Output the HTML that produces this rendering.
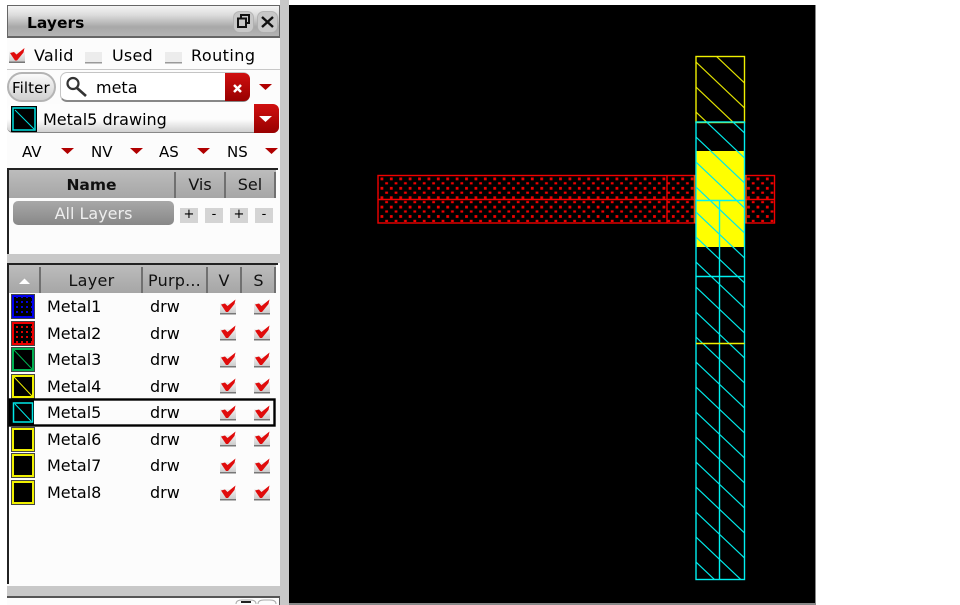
<!DOCTYPE html>
<html><head><meta charset="utf-8"><style>
html,body{margin:0;padding:0;background:#fff;}
body{width:960px;height:605px;overflow:hidden;position:relative;font-family:"DejaVu Sans","Liberation Sans",sans-serif;font-size:16px;color:#000;}
.a{position:absolute;white-space:nowrap;}
.t{position:absolute;white-space:nowrap;line-height:20px;height:20px;filter:blur(.35px);}
.hd{position:absolute;text-align:center;color:#111;line-height:24px;filter:blur(.35px);}
.bar{position:absolute;background:linear-gradient(#bcbcbc,#a6a6a6);}
.sep{position:absolute;width:2px;background:#707070;}
svg{position:absolute;left:0;top:0;}
</style></head><body>
<!-- panel surfaces -->
<div class="a" style="left:280px;top:0;width:9px;height:605px;background:#c8c8c8"></div>
<div class="a" style="left:7px;top:6px;width:273px;height:580px;background:#fcfcfc"></div>
<div class="a" style="left:7px;top:586px;width:273px;height:10px;background:#c8c8c8"></div>
<div class="a" style="left:7px;top:5px;width:273px;height:33px;box-sizing:border-box;border:1px solid #666;border-bottom:2px solid #666;background:linear-gradient(#f4f4f4 0,#dcdcdc 30%,#a8a8a8 70%,#b4b4b4 100%)"></div>
<div class="t" style="left:27px;top:13px;font-weight:bold;font-size:15.5px">Layers</div>
<div class="t" style="left:34px;top:46px;letter-spacing:.2px">Valid</div>
<div class="t" style="left:112px;top:46px;letter-spacing:.2px">Used</div>
<div class="t" style="left:191px;top:46px;letter-spacing:.45px">Routing</div>
<div class="a" style="left:7px;top:69px;width:273px;height:1px;background:#c8c8c8"></div>
<div class="a" style="left:7px;top:72px;width:49px;height:30px;box-sizing:border-box;border:2px solid #b4b4b4;border-radius:15px;background:linear-gradient(#fafafa,#d0d0d0)"></div>
<div class="t" style="left:12px;top:78px;font-size:15px;letter-spacing:.1px">Filter</div>
<div class="a" style="left:60px;top:72px;width:190px;height:30px;box-sizing:border-box;border:1px solid #c4c4c4;border-bottom:2px solid #888;border-radius:7px;background:#fff"></div>
<div class="t" style="left:96px;top:78px">meta</div>
<div class="a" style="left:225px;top:73px;width:25px;height:28px;border-radius:0 6px 6px 0;background:linear-gradient(#d01010,#980000)"></div>
<div class="a" style="left:7px;top:104px;width:272px;height:29px;box-sizing:border-box;border-radius:6px;background:linear-gradient(#fdfdfd 55%,#d0d0d0);border-bottom:1px solid #888"></div>
<div class="t" style="left:43px;top:110px">Metal5 drawing</div>
<div class="a" style="left:254px;top:104px;width:25px;height:29px;border-radius:0 6px 6px 0;background:linear-gradient(#d01010,#980000)"></div>
<div class="t" style="left:22px;top:142px;font-size:15px">AV</div>
<div class="t" style="left:91px;top:142px;font-size:15px">NV</div>
<div class="t" style="left:159px;top:142px;font-size:15px">AS</div>
<div class="t" style="left:227px;top:142px;font-size:15px">NS</div>
<!-- name table -->
<div class="a" style="left:7px;top:168px;width:271px;height:2px;background:#222"></div>
<div class="a" style="left:7px;top:168px;width:2px;height:88px;background:#222"></div>
<div class="bar" style="left:9px;top:170px;width:267px;height:28px"></div>
<div class="sep" style="left:174px;top:172px;height:26px"></div>
<div class="sep" style="left:224px;top:172px;height:26px"></div>
<div class="sep" style="left:274px;top:172px;height:26px"></div>
<div class="hd" style="left:9px;top:170px;width:165px;height:28px;line-height:30px;font-weight:bold;font-size:15.5px">Name</div>
<div class="hd" style="left:176px;top:170px;width:48px;height:28px;line-height:30px">Vis</div>
<div class="hd" style="left:226px;top:170px;width:48px;height:28px;line-height:30px">Sel</div>
<div class="a" style="left:13px;top:201px;width:161px;height:24px;border-radius:5px;background:linear-gradient(#a8a8a8,#888)"></div>
<div class="hd" style="left:13px;top:201px;width:161px;height:24px;color:#eee;line-height:25px">All Layers</div>
<div class="a" style="left:180px;top:208px;width:18px;height:15px;background:#d4d4d4;text-align:center;line-height:14px;font-size:13px">+</div>
<div class="a" style="left:205px;top:208px;width:18px;height:15px;background:#d4d4d4;text-align:center;line-height:14px;font-size:13px">-</div>
<div class="a" style="left:230px;top:208px;width:18px;height:15px;background:#d4d4d4;text-align:center;line-height:14px;font-size:13px">+</div>
<div class="a" style="left:255px;top:208px;width:18px;height:15px;background:#d4d4d4;text-align:center;line-height:14px;font-size:13px">-</div>
<div class="a" style="left:7px;top:254px;width:273px;height:9px;background:#c8c8c8"></div>
<!-- layer table -->
<div class="a" style="left:7px;top:263px;width:271px;height:2px;background:#222"></div>
<div class="a" style="left:7px;top:263px;width:2px;height:321px;background:#222"></div>
<div class="bar" style="left:9px;top:265px;width:267px;height:28px"></div>
<div class="sep" style="left:39px;top:267px;height:26px"></div>
<div class="sep" style="left:141px;top:267px;height:26px"></div>
<div class="sep" style="left:206px;top:267px;height:26px"></div>
<div class="sep" style="left:240px;top:267px;height:26px"></div>
<div class="sep" style="left:274px;top:267px;height:26px"></div>
<div class="hd" style="left:42px;top:265px;width:99px;height:28px;line-height:31px;letter-spacing:.3px">Layer</div>
<div class="hd" style="left:143px;top:265px;width:63px;height:28px;line-height:31px;letter-spacing:.2px">Purp...</div>
<div class="hd" style="left:208px;top:265px;width:32px;height:28px;line-height:31px">V</div>
<div class="hd" style="left:242px;top:265px;width:33px;height:28px;line-height:31px">S</div>
<div class="t" style="left:47px;top:297px">Metal1</div><div class="t" style="left:150px;top:297px">drw</div>
<div class="t" style="left:47px;top:324px">Metal2</div><div class="t" style="left:150px;top:324px">drw</div>
<div class="t" style="left:47px;top:350px">Metal3</div><div class="t" style="left:150px;top:350px">drw</div>
<div class="t" style="left:47px;top:377px">Metal4</div><div class="t" style="left:150px;top:377px">drw</div>
<div class="t" style="left:47px;top:403px">Metal5</div><div class="t" style="left:150px;top:403px">drw</div>
<div class="t" style="left:47px;top:430px">Metal6</div><div class="t" style="left:150px;top:430px">drw</div>
<div class="t" style="left:47px;top:456px">Metal7</div><div class="t" style="left:150px;top:456px">drw</div>
<div class="t" style="left:47px;top:483px">Metal8</div><div class="t" style="left:150px;top:483px">drw</div>
<!-- bottom panel -->
<div class="a" style="left:7px;top:596px;width:273px;height:9px;box-sizing:border-box;border-top:2px solid #555;border-right:1px solid #555;background:#fcfcfc"></div>
<!-- canvas -->
<div class="a" style="left:289px;top:5px;width:526px;height:598px;background:#000;border-right:1px solid #888;border-bottom:2px solid #888;"></div>

<svg width="960" height="605" viewBox="0 0 960 605">
<defs>
<pattern id="rd" width="9.4" height="9.4" patternUnits="userSpaceOnUse" x="378" y="175">
<rect x="2.500" y="2.500" width="2.800" height="2.800" fill="#f00000"/><rect x="7.200" y="7.200" width="2.200" height="2.200" fill="#f00000"/><rect x="0" y="7.200" width=".6" height="2.200" fill="#f00000"/>
</pattern>
<pattern id="ms" width="5" height="5" patternUnits="userSpaceOnUse">
<rect x="1" y="1" width="2" height="2" fill="#e00000"/>
</pattern>
<pattern id="mb" width="5" height="5" patternUnits="userSpaceOnUse">
<rect x="1" y="1" width="2" height="2" fill="#0000e0"/>
</pattern>
<clipPath id="cy"><rect x="696" y="56" width="49" height="66"/></clipPath>
<clipPath id="cc"><rect x="696" y="122" width="49" height="458"/></clipPath>
<linearGradient id="cb" x1="0" y1="0" x2="0" y2="1"><stop offset="0" stop-color="#f4f4f4"/><stop offset="1" stop-color="#c8c8c8"/></linearGradient>
<symbol id="chk" viewBox="0 0 18 16" overflow="visible">
<rect x="1" y="4" width="16" height="11" fill="url(#cb)"/><rect x="1" y="14" width="16" height="1.500" fill="#777"/>
<path d="M2 5.500 L6 4.500 L8.500 7 L16.500 .5 L15.500 5 L9 13 L7 13 Z" fill="#e00c0c"/>
</symbol>
</defs>

<!-- window controls -->
<rect x="233.500" y="11.500" width="20" height="21" rx="6" fill="#c8c8c8" stroke="#aaa" stroke-opacity=".7"/>
<rect x="257.500" y="11.500" width="20" height="21" rx="6" fill="#c8c8c8" stroke="#aaa" stroke-opacity=".7"/>
<path d="M241 18 V15 H249 V23 H246 M238 18.500 H246 V27 H238 Z" fill="none" stroke="#111" stroke-width="2"/>
<path d="M262 17 L273 27 M273 17 L262 27" stroke="#111" stroke-width="2.400"/>

<!-- filter row checkboxes -->
<use href="#chk" x="8" y="47.500" width="18" height="16"/>
<rect x="85" y="52" width="17" height="11" fill="#ececec"/><rect x="85" y="62" width="17" height="1.500" fill="#999"/>
<rect x="165" y="52" width="17" height="11" fill="#ececec"/><rect x="165" y="62" width="17" height="1.500" fill="#999"/>

<!-- search icon -->
<circle cx="73" cy="83.500" r="5.500" fill="none" stroke="#333" stroke-width="2.200"/>
<path d="M77 88 L86 96" stroke="#333" stroke-width="2.600"/>
<path d="M234 85 L241 92 M241 85 L234 92" stroke="#fff" stroke-width="2.500"/>
<path d="M259 84 H272 L265.500 90Z" fill="#b00000"/>

<!-- current layer swatch -->
<rect x="11.500" y="106.500" width="25" height="25" fill="#000" stroke="#000"/>
<rect x="13" y="108" width="22" height="22" fill="#000" stroke="#00e0e0" stroke-width="1.500"/>
<path d="M15 110 L34 129" stroke="#00e0e0"/>
<path d="M259 116 H272 L265.500 122Z" fill="#fff"/>

<!-- AV etc arrows -->
<path d="M61 148 H74 L67.500 154Z M130 148 H143 L136.500 154Z M197 148 H210 L203.500 154Z M265 148 H278 L271.500 154Z" fill="#b00000"/>
<path d="M19 284 H30 L24.500 278.500Z" fill="#fff"/>

<!-- swatches -->
<g shape-rendering="crispEdges">
<rect x="11" y="294" width="24" height="25" fill="#444"/><rect x="13" y="296" width="20" height="21" fill="#000" stroke="#0000f0" stroke-width="2"/><rect x="13" y="296" width="20" height="21" fill="url(#mb)"/>
<rect x="11" y="321" width="24" height="25" fill="#444"/><rect x="13" y="323" width="20" height="21" fill="#000" stroke="#f00000" stroke-width="2"/><rect x="13" y="323" width="20" height="21" fill="url(#ms)"/>
<rect x="11" y="347" width="24" height="25" fill="#444"/><rect x="13" y="349" width="20" height="21" fill="#000" stroke="#00b050" stroke-width="2"/>
<rect x="11" y="374" width="24" height="25" fill="#444"/><rect x="13" y="376" width="20" height="21" fill="#000" stroke="#f0f000" stroke-width="2"/>
<rect x="11" y="427" width="24" height="25" fill="#444"/><rect x="13" y="429" width="20" height="21" fill="#000" stroke="#f0f000" stroke-width="2"/>
<rect x="11" y="453" width="24" height="25" fill="#444"/><rect x="13" y="455" width="20" height="21" fill="#000" stroke="#f0f000" stroke-width="2"/>
<rect x="11" y="480" width="24" height="25" fill="#444"/><rect x="13" y="482" width="20" height="21" fill="#000" stroke="#f0f000" stroke-width="2"/>
</g>
<path d="M14 350 L32 369" stroke="#00b050"/>
<path d="M14 377 L32 396" stroke="#f0f000"/>

<!-- selected row -->
<rect x="9.500" y="399.500" width="265" height="26" fill="none" stroke="#000" stroke-width="2.400"/>
<rect x="10" y="400" width="24" height="25" fill="#000"/>
<rect x="13.500" y="403" width="19" height="19" fill="#000" stroke="#00e8e8" stroke-width="1.500"/>
<path d="M15 404 L31 421" stroke="#00e8e8"/>

<!-- check marks -->
<use href="#chk" x="219" y="299" width="18" height="16"/><use href="#chk" x="253" y="299" width="18" height="16"/>
<use href="#chk" x="219" y="325" width="18" height="16"/><use href="#chk" x="253" y="325" width="18" height="16"/>
<use href="#chk" x="219" y="352" width="18" height="16"/><use href="#chk" x="253" y="352" width="18" height="16"/>
<use href="#chk" x="219" y="378" width="18" height="16"/><use href="#chk" x="253" y="378" width="18" height="16"/>
<use href="#chk" x="219" y="405" width="18" height="16"/><use href="#chk" x="253" y="405" width="18" height="16"/>
<use href="#chk" x="219" y="431" width="18" height="16"/><use href="#chk" x="253" y="431" width="18" height="16"/>
<use href="#chk" x="219" y="458" width="18" height="16"/><use href="#chk" x="253" y="458" width="18" height="16"/>
<use href="#chk" x="219" y="485" width="18" height="16"/><use href="#chk" x="253" y="485" width="18" height="16"/>

<!-- bottom panel buttons -->
<path d="M236 604 Q236 600 242 600 H250 Q256 600 256 604 M258 604 Q258 600 264 600 H270 Q276 600 276 604" fill="none" stroke="#aaa"/>
<rect x="241" y="601" width="10" height="2" fill="#222"/>

<!-- red metal -->
<rect x="378" y="175" width="397" height="48" fill="url(#rd)"/>
<g fill="none" stroke="#f00000" stroke-width="1.400">
<rect x="378" y="175.500" width="396.500" height="47.500"/>
<path d="M378 199.500 H775 M667 175 V223"/>
</g>

<!-- yellow fill -->
<rect x="696" y="151" width="49" height="96" fill="#ffff00"/>
<path d="M694.500 175 V223 M746 175 V223" stroke="#e05000" stroke-width="1.500"/>

<!-- yellow hatch -->
<g clip-path="url(#cy)" stroke="#e0e000" stroke-width="1.200" fill="none">
<path d="M696 37 L745 83.500 M696 62 L745 108.500 M696 87 L745 133.500 M696 112 L745 158.500"/>
</g>
<rect x="696" y="56.500" width="48.500" height="66" fill="none" stroke="#f0f000" stroke-width="1.400"/>

<!-- cyan hatch -->
<g clip-path="url(#cc)" stroke="#00e8e8" stroke-width="1.200" fill="none">
<path d="M696 87 L745 133.500 M696 112 L745 158.500 M696 137 L745 183.500 M696 162 L745 208.500 M696 187 L745 233.500 M696 212 L745 258.500 M696 237 L745 283.500 M696 262 L745 308.500 M696 287 L745 333.500 M696 312 L745 358.500 M696 337 L745 383.500 M696 362 L745 408.500 M696 387 L745 433.500 M696 412 L745 458.500 M696 437 L745 483.500 M696 462 L745 508.500 M696 487 L745 533.500 M696 512 L745 558.500 M696 537 L745 583.500 M696 562 L745 608.500"/>
</g>
<g fill="none" stroke="#00f0f0" stroke-width="1.400">
<rect x="696" y="122" width="48.500" height="457.500"/>
<path d="M696 200.500 H744.500 M696 276.500 H744.500 M719.500 200 V579"/>
</g>
<path d="M696 343.500 H744.500" stroke="#f0f000" stroke-width="1.400"/>
</svg>
</body></html>
